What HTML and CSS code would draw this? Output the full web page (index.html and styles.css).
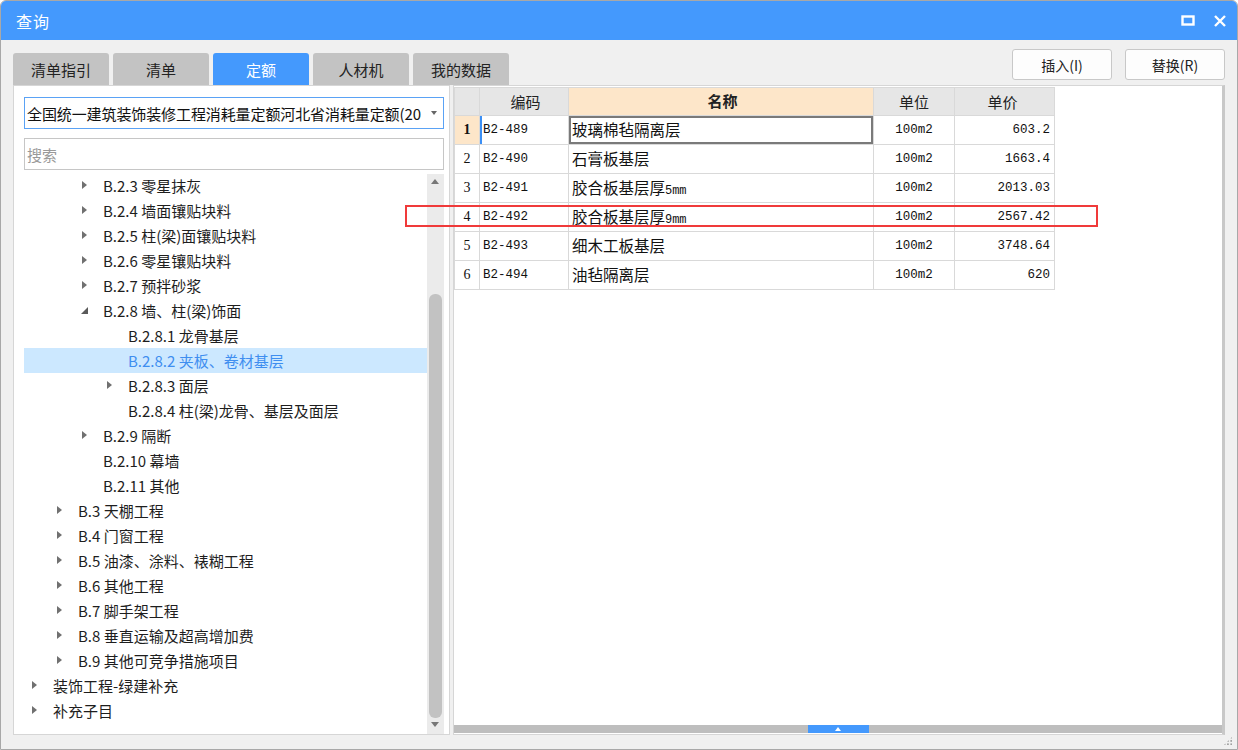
FILE: index.html
```html
<!DOCTYPE html>
<html>
<head>
<meta charset="utf-8">
<link rel="stylesheet" href="styles.css">
</head>
<body>
<div class="window">
  <div class="titlebar">
    <span class="title">查询</span>
    <div class="winbtns">
      <svg width="14" height="12" viewBox="0 0 14 12"><rect x="1.5" y="1.5" width="11" height="8" fill="none" stroke="#fff" stroke-width="2.4"/></svg>
      <svg width="14" height="14" viewBox="0 0 14 14"><path d="M2 2 L12 12 M12 2 L2 12" stroke="#fff" stroke-width="2.4"/></svg>
    </div>
  </div>
  <div class="toolbar">
    <div class="tabs">
      <div class="tab">清单指引</div>
      <div class="tab">清单</div>
      <div class="tab active">定额</div>
      <div class="tab">人材机</div>
      <div class="tab">我的数据</div>
    </div>
    <div class="actions">
      <button class="btn">插入(I)</button>
      <button class="btn">替换(R)</button>
    </div>
  </div>
  <div class="main">
    <div class="leftpane">
      <div class="combo"><span class="combo-text">全国统一建筑装饰装修工程消耗量定额河北省消耗量定额(20</span><span class="combo-arrow"></span></div>
      <div class="search">搜索</div>
      <div class="treewrap">
        <div class="tree">
          <div class="row l3"><span class="arr"></span>B.2.3 零星抹灰</div>
          <div class="row l3"><span class="arr"></span>B.2.4 墙面镶贴块料</div>
          <div class="row l3"><span class="arr"></span>B.2.5 柱(梁)面镶贴块料</div>
          <div class="row l3"><span class="arr"></span>B.2.6 零星镶贴块料</div>
          <div class="row l3"><span class="arr"></span>B.2.7 预拌砂浆</div>
          <div class="row l3"><span class="arr open"></span>B.2.8 墙、柱(梁)饰面</div>
          <div class="row l4"><span class="arr none"></span>B.2.8.1 龙骨基层</div>
          <div class="row l4 sel"><span class="arr none"></span>B.2.8.2 夹板、卷材基层</div>
          <div class="row l4"><span class="arr"></span>B.2.8.3 面层</div>
          <div class="row l4"><span class="arr none"></span>B.2.8.4 柱(梁)龙骨、基层及面层</div>
          <div class="row l3"><span class="arr"></span>B.2.9 隔断</div>
          <div class="row l3"><span class="arr none"></span>B.2.10 幕墙</div>
          <div class="row l3"><span class="arr none"></span>B.2.11 其他</div>
          <div class="row l2"><span class="arr"></span>B.3 天棚工程</div>
          <div class="row l2"><span class="arr"></span>B.4 门窗工程</div>
          <div class="row l2"><span class="arr"></span>B.5 油漆、涂料、裱糊工程</div>
          <div class="row l2"><span class="arr"></span>B.6 其他工程</div>
          <div class="row l2"><span class="arr"></span>B.7 脚手架工程</div>
          <div class="row l2"><span class="arr"></span>B.8 垂直运输及超高增加费</div>
          <div class="row l2"><span class="arr"></span>B.9 其他可竞争措施项目</div>
          <div class="row l1"><span class="arr"></span>装饰工程-绿建补充</div>
          <div class="row l1"><span class="arr"></span>补充子目</div>
        </div>
        <div class="vscroll">
          <span class="up"></span>
          <div class="vtrack"><div class="vthumb"></div></div>
          <span class="down"></span>
        </div>
      </div>
    </div>
    <div class="rightpane">
      <div class="grid">
        <div class="gr head">
          <div class="c rh"></div>
          <div class="c code">编码</div>
          <div class="c name hl">名称</div>
          <div class="c unit">单位</div>
          <div class="c price">单价</div>
        </div>
        <div class="gr">
          <div class="c rh cur">1</div>
          <div class="c code curcode">B2-489</div>
          <div class="c name focus"><span>玻璃棉毡隔离层</span></div>
          <div class="c unit">100m2</div>
          <div class="c price">603.2</div>
        </div>
        <div class="gr">
          <div class="c rh">2</div>
          <div class="c code">B2-490</div>
          <div class="c name"><span>石膏板基层</span></div>
          <div class="c unit">100m2</div>
          <div class="c price">1663.4</div>
        </div>
        <div class="gr">
          <div class="c rh">3</div>
          <div class="c code">B2-491</div>
          <div class="c name"><span>胶合板基层厚<span class="mm">5mm</span></span></div>
          <div class="c unit">100m2</div>
          <div class="c price">2013.03</div>
        </div>
        <div class="gr">
          <div class="c rh">4</div>
          <div class="c code">B2-492</div>
          <div class="c name"><span>胶合板基层厚<span class="mm">9mm</span></span></div>
          <div class="c unit">100m2</div>
          <div class="c price">2567.42</div>
        </div>
        <div class="gr">
          <div class="c rh">5</div>
          <div class="c code">B2-493</div>
          <div class="c name"><span>细木工板基层</span></div>
          <div class="c unit">100m2</div>
          <div class="c price">3748.64</div>
        </div>
        <div class="gr">
          <div class="c rh">6</div>
          <div class="c code">B2-494</div>
          <div class="c name"><span>油毡隔离层</span></div>
          <div class="c unit">100m2</div>
          <div class="c price">620</div>
        </div>
      </div>
      <div class="hscroll"><div class="hthumb"><span class="hup"></span></div></div>
    </div>
  </div>
  <div class="statusbar"><span class="grip"></span></div>
  <div class="redbox"></div>
</div>
</body>
</html>
```
FILE: styles.css
```css
* { box-sizing: border-box; }
html, body { margin: 0; padding: 0; }
body {
  width: 1238px; height: 750px; overflow: hidden;
  font-family: "Noto Sans CJK SC", "Noto Sans", sans-serif;
  background: #fff;
}
.window {
  position: relative;
  width: 1238px; height: 750px;
  background: #f0f0f0;
  border: 1px solid #a8a8a8;
  border-radius: 6px 6px 0 0;
  overflow: hidden;
  display: flex; flex-direction: column;
}
.titlebar {
  height: 39px; flex: none;
  background: #4499fd;
  display: flex; align-items: center; justify-content: space-between;
  padding: 0 10px 0 15px;
}
.title { color: #fff; font-size: 16px; letter-spacing: 1px; }
.winbtns { display: flex; align-items: center; gap: 18px; }
.winbtns svg { display: block; }

.toolbar {
  height: 45px; flex: none;
  display: flex; justify-content: space-between;
  padding: 9px 12px 0 12px;
}
.tabs { display: flex; gap: 4px; margin-top: 4px; }
.tab {
  width: 96px; height: 32px;
  background: #c3c3c3;
  border-radius: 3px 3px 0 0;
  font-size: 15px; color: #222;
  display: flex; align-items: center; justify-content: center;
}
.tab.active { background: #4499fd; color: #fff; }
.actions { display: flex; gap: 13px; }
.btn {
  width: 100px; height: 31px;
  background: #fdfdfd;
  border: 1px solid #c8c8c8; border-radius: 3px;
  font-family: "Noto Sans CJK SC", "Noto Sans", sans-serif;
  font-size: 14px; color: #222; padding: 0;
}

.main {
  flex: none; height: 650px;
  display: flex; gap: 3px;
  padding: 0 12px;
}
.leftpane {
  width: 437px; height: 650px;
  background: #fff;
  border: 1px solid #d6d6d6;
  padding: 11px 5px 0 10px;
  display: flex; flex-direction: column;
}
.combo {
  height: 32px; flex: none;
  border: 1px solid #5aa2f5;
  display: flex; align-items: center;
  padding: 0 6px 0 2px;
}
.combo-text {
  flex: 1; overflow: hidden; white-space: nowrap;
  font-size: 15px; color: #111; letter-spacing: -0.1px;
}
.combo-arrow {
  width: 0; height: 0; margin-left: 10px;
  border-left: 3px solid transparent; border-right: 3px solid transparent;
  border-top: 4px solid #666;
}
.search {
  height: 32px; flex: none; margin-top: 9px;
  border: 1px solid #c6c6c6;
  font-size: 15px; color: #999;
  display: flex; align-items: center; padding-left: 2px;
}
.treewrap {
  margin-top: 4px; height: 560px;
  display: flex;
}
.tree { flex: 1; margin-top: -1px; }
.row {
  height: 25px; display: flex; align-items: center;
  font-size: 15px; color: #1e1e1e; white-space: nowrap;
}
.row.sel { background: #cce8ff; color: #3f8ef0; }
.l1 { padding-left: 8px; }
.l2 { padding-left: 33px; }
.l3 { padding-left: 58px; }
.l4 { padding-left: 83px; }
.arr {
  width: 21px; height: 25px; flex: none; position: relative;
}
.arr::before {
  content: ""; position: absolute; left: 0; top: 8px;
  border-top: 4px solid transparent; border-bottom: 4px solid transparent;
  border-left: 5px solid #707070;
}
.arr.open::before {
  top: 9px; left: -1px;
  border: none;
  width: 0; height: 0;
  border-left: 7px solid transparent;
  border-bottom: 7px solid #5a5a5a;
}
.arr.none::before { display: none; }
.vscroll {
  width: 17px; flex: none;
  background: #ebebeb;
  display: flex; flex-direction: column; align-items: center;
}
.vscroll .up, .vscroll .down { height: 16px; width: 17px; position: relative; flex: none; }
.vscroll .up::before {
  content: ""; position: absolute; left: 4px; top: 5px;
  border-left: 4.5px solid transparent; border-right: 4.5px solid transparent;
  border-bottom: 5px solid #777;
}
.vscroll .down::before {
  content: ""; position: absolute; left: 4px; top: 4px;
  border-left: 4.5px solid transparent; border-right: 4.5px solid transparent;
  border-top: 5px solid #777;
}
.vtrack { flex: 1; width: 17px; padding: 104px 2px 0 2px; }
.vthumb { height: 424px; background: #c2c2c2; border-radius: 6px; }

.rightpane {
  width: 775px; height: 650px;
  background: #fff;
  border: 1px solid #d6d6d6;
  border-right: 3px solid #c8c8c8;
  display: flex; flex-direction: column;
}
.grid { flex: 1; padding-top: 1px; }
.gr { display: flex; height: 29px; }
.gr.head { height: 29px; }
.c {
  border-right: 1px solid #d9d9d9; border-bottom: 1px solid #d9d9d9;
  display: flex; align-items: center;
  font-family: "Liberation Mono", monospace; font-size: 12.5px; color: #111;
  white-space: nowrap;
}
.gr.head .c { background: #e6e6e6; font-family: "Noto Sans CJK SC", sans-serif; font-size: 15px; color: #222; justify-content: center; border-top: 1px solid #d9d9d9; }
.gr.head .c.hl { background: #fde6c9; font-weight: bold; }
.rh { width: 26px; justify-content: center; font-family: "Liberation Serif", serif; font-size: 14px; border-left: 1px solid #d9d9d9; }
.rh.cur { background: #fde6c9; font-weight: bold; }
.code { width: 89px; padding-left: 3px; }
.curcode { box-shadow: inset 2px 0 0 #3b8ff5; }
.name { width: 305px; padding-left: 3px; padding-bottom: 2px; font-family: "Noto Sans CJK SC", sans-serif; font-size: 15.5px; }
.name .mm { font-family: "Liberation Mono", monospace; font-size: 12px; }
.name.focus { box-shadow: inset 0 0 0 2px #7a7a7a; }
.unit { width: 81px; justify-content: center; }
.price { width: 100px; justify-content: flex-end; padding-right: 4px; }
.gr.head .price, .gr.head .unit { justify-content: center; }

.hscroll {
  height: 8px; flex: none; margin-bottom: 1px;
  background: #bebebe;
  padding-left: 354px;
}
.hthumb {
  width: 61px; height: 8px; background: #4499fd; position: relative;
}
.hup {
  position: absolute; left: 27px; top: 2px;
  border-left: 3px solid transparent; border-right: 3px solid transparent;
  border-bottom: 4px solid #fff;
}
.statusbar { flex: 1; position: relative; }
.grip {
  position: absolute; right: 4px; bottom: 3px;
  width: 10px; height: 10px;
  background:
    radial-gradient(circle, #a0a0a0 1px, transparent 1.2px) 0 0 / 3.3px 3.3px;
  clip-path: polygon(100% 0, 100% 100%, 0 100%);
}
.redbox {
  position: absolute; left: 404px; top: 204px;
  width: 693px; height: 22px;
  border: 2px solid #f03a3a;
}
```
